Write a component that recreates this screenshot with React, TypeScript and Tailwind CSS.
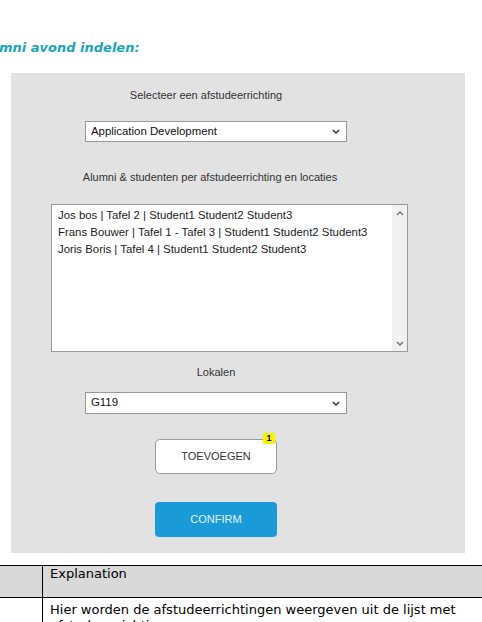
const rows = [
  "Jos bos | Tafel 2 | Student1 Student2 Student3",
  "Frans Bouwer | Tafel 1 - Tafel 3 | Student1 Student2 Student3",
  "Joris Boris | Tafel 4 | Student1 Student2 Student3",
];

function Chevron({ up = false, color = "#333" }: { up?: boolean; color?: string }) {
  return (
    <svg width="8" height="5" viewBox="0 0 8 5" className="block">
      <polyline
        points={up ? "1,4 4,1 7,4" : "1,1 4,4 7,1"}
        fill="none"
        stroke={color}
        strokeWidth="1.5"
      />
    </svg>
  );
}

function FakeSelect({ value, className = "" }: { value: string; className?: string }) {
  return (
    <div
      className={`w-[262px] flex items-center justify-between border border-[#9a9a9a] bg-white pl-[5px] pr-[6px] text-[11.4px] text-[#111] ${className}`}
    >
      <span>{value}</span>
      <Chevron />
    </div>
  );
}

export default function App() {
  return (
    <div className="w-[482px] h-[622px] overflow-hidden bg-white font-['Liberation_Sans',Arial,sans-serif]">
      <h2 className="pt-[40px] -ml-[1px] text-[13px] leading-[16px] font-bold italic text-[#1ba3b6] font-['DejaVu_Sans',Verdana,sans-serif]">
        mni avond indelen:
      </h2>

      {/* form panel */}
      <div className="mt-[17px] ml-[11px] w-[454px] h-[480px] bg-[#e2e2e2]">
        <div className="w-[410px] flex flex-col items-center">
          <p className="mt-[15px] w-full pr-[20px] text-center text-[11px] leading-[14px] text-[#333]">
            Selecteer een afstudeerrichting
          </p>
          <FakeSelect value="Application Development" className="mt-[19px] h-[21px]" />

          <p className="mt-[28px] w-full pr-[12px] text-center text-[11px] leading-[14px] text-[#333]">
            Alumni &amp; studenten per afstudeerrichting en locaties
          </p>

          <div className="mt-[20px] self-start ml-[40px] w-[357px] h-[148px] flex border border-[#9a9a9a] bg-white">
            <div className="flex-1 pl-[6px] pt-[2px] text-[11.4px] leading-[17px] text-[#222]">
              {rows.map((r) => (
                <div key={r}>{r}</div>
              ))}
            </div>
            <div className="w-[15px] bg-[#f1f1f1] flex flex-col items-center justify-between pt-[6px] pb-[5px]">
              <Chevron up color="#777" />
              <Chevron color="#777" />
            </div>
          </div>

          <p className="mt-[13px] w-full text-center text-[11px] leading-[14px] text-[#333]">
            Lokalen
          </p>
          <FakeSelect value="G119" className="mt-[13px] h-[22px]" />

          <div className="relative mt-[25px] w-[122px] h-[35px] flex items-center justify-center rounded-[5px] border border-[#9a9a9a] bg-white text-[11px] text-[#333]">
            TOEVOEGEN
            <span className="absolute left-[107px] -top-[7px] w-[12px] h-[11px] flex items-center justify-center bg-[#f4f400] text-[9px] font-bold leading-none text-black">
              1
            </span>
          </div>

          <div className="mt-[28px] w-[122px] h-[35px] flex items-center justify-center rounded-[4px] bg-[#1a9ad6] text-[11px] text-[#e3f2fb]">
            CONFIRM
          </div>
        </div>
      </div>

      {/* table */}
      <div className="mt-[12px] w-[482px] border-t border-black font-['DejaVu_Sans',Verdana,sans-serif] text-[13px] leading-[16px] text-black">
        <div className="flex h-[32px] bg-[#d9d9d9] border-b border-black">
          <div className="w-[43px] border-r border-black" />
          <div className="pl-[7px]">Explanation</div>
        </div>
        <div className="flex h-[60px]">
          <div className="w-[43px] border-r border-black" />
          <div className="pl-[7px] pt-[4px] w-[430px]">
            Hier worden de afstudeerrichtingen weergeven uit de lijst met afstudeer richtingen
          </div>
        </div>
      </div>
    </div>
  );
}
